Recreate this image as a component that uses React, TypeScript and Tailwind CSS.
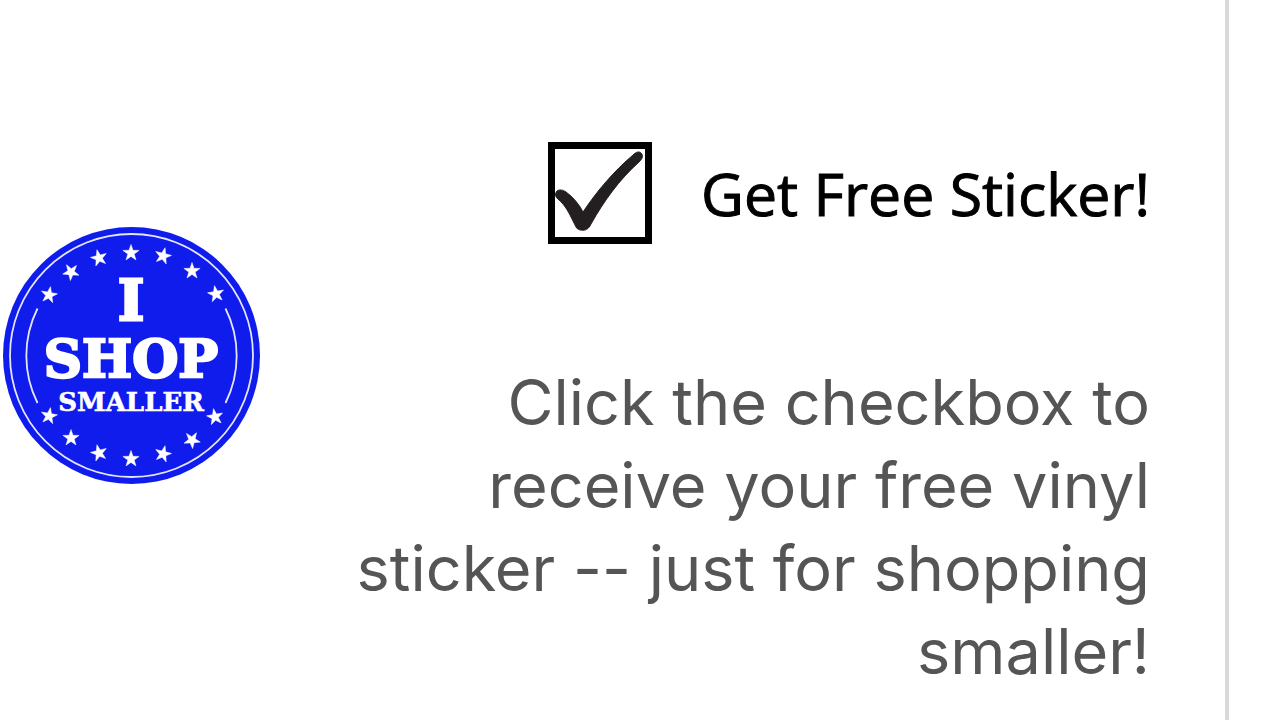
const STARS = [
  { x: 49, y: 295, turn: 10 },
  { x: 71, y: 272, turn: -32 },
  { x: 99, y: 258, turn: -14 },
  { x: 131, y: 253, turn: 0 },
  { x: 163, y: 256, turn: 14 },
  { x: 192, y: 271, turn: 0 },
  { x: 216, y: 294, turn: -10 },
  { x: 49, y: 416, turn: 10 },
  { x: 71, y: 438, turn: 0 },
  { x: 99, y: 453, turn: -14 },
  { x: 131, y: 459, turn: 0 },
  { x: 163, y: 454, turn: 14 },
  { x: 192, y: 440, turn: 32 },
  { x: 215, y: 417, turn: -10 },
]

function ShopSmallerBadge() {
  return (
    <svg viewBox="3 226 258 259" className="w-[258px] shrink-0" role="img" aria-label="I Shop Smaller">
      <circle cx="131.5" cy="355.5" r="128.5" fill="#101cec" />
      <circle cx="131.5" cy="355.5" r="121.5" fill="none" stroke="#e4e6ff" strokeWidth="1.8" />
      <g fill="none" stroke="#e4e6ff" strokeWidth="1.8">
        <path d="M37.5 308.5A105.5 105.5 0 0 0 37.5 403" />
        <path d="M225.5 308.5A105.5 105.5 0 0 1 225.5 403" />
      </g>
      {STARS.map((s) => (
        <path
          key={`${s.x}-${s.y}`}
          d="M0-8.5 2-2.7 8.1-2.6 3.2 1.1 5 6.9 0 3.4-5 6.9-3.2 1.1-8.1-2.6-2-2.7Z"
          transform={`translate(${s.x} ${s.y}) rotate(${s.turn})`}
          fill="#fff"
          stroke="#fff"
          strokeWidth="0.5"
        />
      ))}
      <g fill="#fff" stroke="#fff" textAnchor="middle" className="font-['DejaVu_Serif',serif] font-bold">
        <text x="131" y="320" fontSize="56" strokeWidth="3">I</text>
        <text x="131" y="377" fontSize="53" strokeWidth="2.5">SHOP</text>
        <text x="131" y="411" fontSize="26" strokeWidth="0.6">SMALLER</text>
      </g>
    </svg>
  )
}

function StickerCheckbox() {
  return (
    <span className="relative block h-[102px] w-[104px] shrink-0">
      <input
        id="free-sticker"
        type="checkbox"
        defaultChecked
        className="peer block h-full w-full appearance-none border-[7px] border-black bg-white"
      />
      <svg
        viewBox="0 0 104 102"
        className="pointer-events-none absolute inset-0 hidden peer-checked:block"
        aria-hidden="true"
      >
        <path
          d="M9 49C12 47 15 48 18 50C25 55 31 62 35 70C49 49 66 29 85 13C88 10 91 9 93 11C96 14 94 17 91 20C71 38 56 59 43 82C41 87 37 89 33 88C29 88 28 85 26 81C21 71 18 64 10 57C7 55 7 51 9 49Z"
          fill="#231f20"
          stroke="#231f20"
          strokeWidth="1"
        />
      </svg>
    </span>
  )
}

export default function App() {
  return (
    <main className="flex min-h-screen bg-white">
      <section className="flex flex-1 items-start border-r-4 border-[#d8d8d8] pl-[3px] pr-[75px]">
        <div className="flex shrink-0 pt-[226px]">
          <ShopSmallerBadge />
        </div>

        {/* Offer */}
        <div className="flex flex-1 flex-col items-end pl-20 pt-[142px]">
          <div className="flex items-center gap-[49px]">
            <StickerCheckbox />
            <label
              htmlFor="free-sticker"
              className="whitespace-nowrap font-['Open_Sans',sans-serif] text-[59px] leading-[84px] text-black [-webkit-text-stroke:1px_black]"
            >
              Get Free Sticker!
            </label>
          </div>
          <p className="mt-[117px] text-right font-[Inter,sans-serif] text-[63px] leading-[83px] text-[#555]">
            Click the checkbox to receive your free vinyl sticker -- just for shopping smaller!
          </p>
        </div>
      </section>
      <div className="w-[51px] shrink-0" />
    </main>
  )
}
